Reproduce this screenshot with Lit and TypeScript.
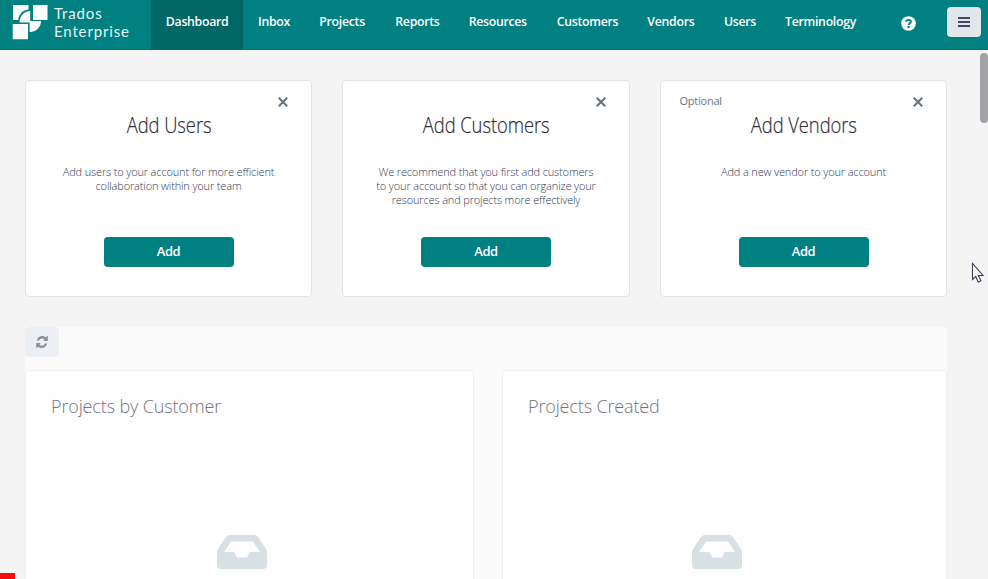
import { LitElement, html, css } from "lit";
import { customElement, property } from "lit/decorators.js";

const tabs: [string, number][] = [
  ["Dashboard", 92], ["Inbox", 61], ["Projects", 76], ["Reports", 74],
  ["Resources", 88], ["Customers", 91], ["Vendors", 76], ["Users", 61], ["Terminology", 101],
];

const cards = [
  { title: "Add Users", lines: ["Add users to your account for more efficient", "collaboration within your team"], note: "" },
  { title: "Add Customers", lines: ["We recommend that you first add customers", "to your account so that you can organize your", "resources and projects more effectively"], note: "" },
  { title: "Add Vendors", lines: ["Add a new vendor to your account"], note: "Optional" },
];

@customElement("setup-card")
class SetupCard extends LitElement {
  @property() heading = "";
  @property() note = "";
  @property({ attribute: false }) lines: string[] = [];
  static styles = css`
    :host { display: flex; flex-direction: column; align-items: center; box-sizing: border-box; height: 217px;
      background: #fff; border: 1px solid #e1e5e9; border-radius: 4px; padding-top: 12px; }
    .top { display: flex; justify-content: space-between; align-items: center; align-self: stretch; height: 18px; padding: 0 22.500px 0 18.500px; }
    .note { margin-top: -2px; font: 11px/16px "Open Sans", sans-serif; letter-spacing: -0.24px; color: #68757f; }
    .close { display: block; width: 12px; height: 12px; }
    h2 { margin: -1px 0 0; height: 29px; font: 300 22px/28px "Open Sans", sans-serif; letter-spacing: -0.1px; color: #302e38; white-space: nowrap; transform: translateX(0.5px) scaleX(0.838); -webkit-text-stroke: 0.2px #302e38; }
    .desc { margin-top: 26px; height: 72px; font: 300 11px/14px "Open Sans", sans-serif; color: #2f3852; text-align: center; white-space: nowrap; letter-spacing: -0.15px; }
    button { width: 130px; height: 30px; border: 0; border-radius: 4px; padding: 0 0 2px; background: #008080; color: #fff; font: 600 13px/28px "Open Sans", sans-serif; letter-spacing: -0.4px; }
  `;
  render() {
    return html`
      <div class="top"><span class="note">${this.note}</span>
        <svg class="close" viewBox="0 0 12 12"><path d="M1.800 1.800L10.200 10.200M10.200 1.800L1.800 10.200" stroke="#68737f" stroke-width="2.100" fill="none"/></svg></div>
      <h2>${this.heading}</h2>
      <div class="desc">${this.lines.map((l) => html`<div>${l}</div>`)}</div>
      <button>Add</button>`;
  }
}

@customElement("chart-panel")
class ChartPanel extends LitElement {
  @property() heading = "";
  static styles = css`
    :host { display: flex; flex-direction: column; align-items: center; box-sizing: border-box; height: 240px;
      background: #fefefe; border: 1px solid #eeeff1; border-radius: 4px; padding: 22px 0 0 25px; }
    h3 { align-self: flex-start; margin: 0; font: 300 18px/26px "Open Sans", sans-serif; color: #74747d; white-space: nowrap; letter-spacing: -0.14px; }
    svg { width: 50px; height: 34px; margin-top: 115.500px; margin-right: 41px; }
  `;
  render() {
    return html`<h3>${this.heading}</h3>
      <svg viewBox="0 0 50 34"><path fill="#d9e0e4" fill-rule="evenodd" d="M13 0H37Q39.500 0 41 2L49 14Q50 15.500 50 17V30Q50 34 46 34H4Q0 34 0 30V17Q0 15.500 1 14L9 2Q10.500 0 13 0ZM14 6.500L7 17H17.500L20 22.500H30L32.500 17H43L36 6.500Z"/></svg>`;
  }
}

@customElement("app-root")
class AppRoot extends LitElement {
  static styles = css`
    :host { display: flex; flex-direction: column; position: relative; width: 988px; height: 579px; overflow: hidden; background: #f4f4f4; font-family: "Open Sans", sans-serif; }
    header { display: flex; flex: none; box-sizing: border-box; height: 50px; background: #008080; border-bottom: 1px solid #007373; }
    .brand { display: flex; width: 151px; flex: none; box-sizing: border-box; padding: 4px 0 0 12px; }
    .logo { width: 36px; height: 36px; flex: none; }
    .name { margin: 0 0 0 6px; font: 400 15px/18px Lato, sans-serif; color: #e6f3f3; letter-spacing: 0.85px; }
    nav { display: flex; flex: none; }
    .tab { height: 50px; text-align: center; font-size: 13px; font-weight: 600; line-height: 43px; color: #fff; letter-spacing: -0.3px; white-space: nowrap; }
    .label { display: inline-block; transform: scaleX(0.945); }
    .active { background: #006666; }
    .help { width: 15px; height: 15px; margin: 15.500px 0 0 30px; }
    .menu { display: flex; flex-direction: column; justify-content: center; align-items: center; gap: 2px; box-sizing: border-box; width: 34px; height: 30px; margin: 7px 0 0 31px; border-radius: 4px; background: #e1e6eb; }
    .bar { width: 12px; height: 2px; background: #3f4566; }
    .cards { display: grid; grid-template-columns: 287px 288px 287px; gap: 30px; padding: 30px 0 0 25px; }
    .charts { margin: 30px 0 0 25px; width: 922px; flex: none; background: #fafafa; }
    .refresh { display: flex; align-items: center; justify-content: center; width: 34px; height: 30px; border-radius: 4px; background: #ecf0f4; }
    .refresh svg { width: 12px; height: 12px; }
    .panels { display: grid; grid-template-columns: 449px 445px; gap: 28px; margin-top: 13px; }
    .scroll { position: absolute; left: 980px; top: 53px; width: 8px; height: 70px; border-radius: 4px; background: #a2a3a7; }
    .cursor { position: absolute; left: 971px; top: 262px; width: 13px; height: 22px; }
    .progress { position: absolute; left: 0; bottom: 0; width: 15px; height: 6px; background: #f50d0d; }
  `;
  render() {
    return html`
      <header>
        <div class="brand">
          <svg class="logo" viewBox="12 4 36 36">
            <path fill="#fff" d="M13 5H28.500V9.500C23 10 18.500 14.500 18.300 20H13ZM33 5H47.500V20H33ZM12.700 24H28V39.200H12.700Z"/>
            <path fill="#fff" d="M19.700 21C20 15.500 24.500 11.200 30.200 11V21H41C41 27.500 36 32 29.600 32V22.400H19.700Z"/>
          </svg>
          <div class="name"><div>Trados</div><div>Enterprise</div></div>
        </div>
        <nav>${tabs.map(([t, w], i) => html`<div class="tab ${i === 0 ? "active" : ""}" style="width:${w}px"><span class="label">${t}</span></div>`)}</nav>
        <svg class="help" viewBox="0 0 15 15"><circle cx="7.500" cy="7.500" r="7.300" fill="#fff"/><path d="M5 5.700C5.200 3.300 9.900 3.200 9.900 5.800C9.900 7.400 7.600 7.300 7.600 9" fill="none" stroke="#008080" stroke-width="1.900"/><rect x="6.500" y="10" width="2.100" height="2.100" fill="#008080"/></svg>
        <div class="menu"><div class="bar"></div><div class="bar"></div><div class="bar"></div></div>
      </header>
      <div class="cards">${cards.map((c) => html`<setup-card .heading=${c.title} .note=${c.note} .lines=${c.lines}></setup-card>`)}</div>
      <div class="charts">
        <div class="refresh"><svg viewBox="0 0 512 512"><path fill="#8b909b" d="M371 144C300 77 182 92 135 182C132 188 127 191 121 191H50C43 191 37 184 39 177C72 7 280-60 415 57L463 9C478-6 504 5 504 27V190C504 201 495 210 484 210H350C328 210 317 184 332 169ZM28 302H162C184 302 195 328 180 343L141 368C212 435 330 420 377 330C380 324 385 321 391 321H462C469 321 475 328 473 335C440 505 232 572 97 455L49 503C34 518 8 507 8 485V322C8 311 17 302 28 302Z"/></svg></div>
        <div class="panels"><chart-panel heading="Projects by Customer"></chart-panel><chart-panel heading="Projects Created"></chart-panel></div>
      </div>
      <div class="scroll"></div>
      <svg class="cursor" viewBox="0 0 13 22"><path d="M1.500 1.500V17.500L4.700 14.500L7.300 20L10 18.800L7.400 13.500H12Z" fill="#fff" stroke="#3b3f4f" stroke-width="1.100"/></svg>
      <div class="progress"></div>`;
  }
}
